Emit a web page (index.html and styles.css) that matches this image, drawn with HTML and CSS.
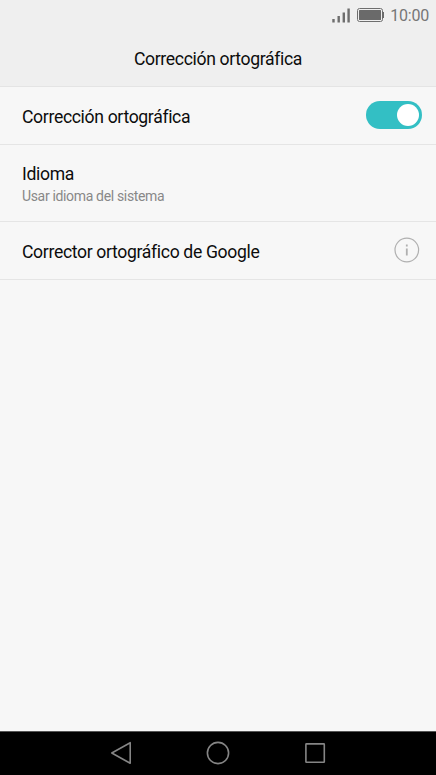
FILE: index.html
```html
<!DOCTYPE html>
<html lang="es">
  <head>
    <meta charset="UTF-8" />
    <meta name="viewport" content="width=device-width, initial-scale=1.0" />
    <title>Corrección ortográfica</title>
    <link rel="stylesheet" href="styles.css">
  </head>

  <body>
    <div class="status-bar">
      <svg class="signal" width="18" height="15" viewBox="0 0 18 15">
        <path d="M1.5 11v3.5M6.7 8v6.5M11.8 4.5v10M16.6 0.5v14" />
      </svg>
      <svg class="battery" width="28" height="14" viewBox="0 0 28 14">
        <rect class="battery-case" x="0.5" y="0.5" width="25" height="13" rx="2" />
        <rect class="battery-level" x="2" y="2" width="22" height="10" rx="0.5" />
        <path class="battery-level" d="M25.5 4h1.5v6h-1.5z" />
      </svg>
      <span class="clock">10:00</span>
    </div>

    <header class="header">
      <h1>Corrección ortográfica</h1>
    </header>

    <main class="settings">
      <div class="row">
        <div class="title">Corrección ortográfica</div>
        <div class="toggle"><div class="knob"></div></div>
      </div>
      <div class="row row-tall">
        <div>
          <div class="title">Idioma</div>
          <div class="summary">Usar idioma del sistema</div>
        </div>
      </div>
      <div class="row">
        <div class="title">Corrector ortográfico de Google</div>
        <svg class="info" width="26" height="26" viewBox="0 0 26 26">
          <circle cx="12.8" cy="13" r="11.8" />
          <path d="M12.8 11.5v7M12.8 7.4v2" />
        </svg>
      </div>
    </main>

    <nav class="nav-bar">
      <svg width="24" height="24" viewBox="0 0 24 24">
        <path d="M21.2 1.7v20.6L2.8 12z" />
      </svg>
      <svg width="24" height="24" viewBox="0 0 24 24">
        <circle cx="12" cy="12" r="10.6" />
      </svg>
      <svg width="24" height="24" viewBox="0 0 24 24">
        <rect x="2.9" y="2.9" width="18.4" height="18.4" rx="0.5" />
      </svg>
    </nav>
  </body>
</html>
```
FILE: styles.css
```css
* {
  box-sizing: border-box;
}

html,
body {
  height: 100%;
}

body {
  display: flex;
  flex-direction: column;
  margin: 0;
  background: #f7f7f7;
  color: #0c0c0c;
  font-family: Roboto, sans-serif;
}

.status-bar {
  display: flex;
  justify-content: flex-end;
  align-items: center;
  height: 30px;
  padding-right: 7px;
  background: #efefef;
}

.signal {
  margin-right: 7px;
  fill: none;
  stroke: #6e6e6e;
  stroke-width: 2.4;
  stroke-linecap: butt;
}

.battery {
  margin-right: 5px;
}

.battery-case {
  fill: none;
  stroke: #6e6e6e;
}

.battery-level {
  fill: #6a6a6a;
}

.clock {
  color: #767676;
  font-size: 16px;
  letter-spacing: -0.2px;
  line-height: 31px;
}

.header {
  height: 57px;
  border-bottom: 1px solid #e4e4e4;
  background: #efefef;
}

h1 {
  margin: 0;
  font-size: 17.6px;
  font-weight: 400;
  letter-spacing: -0.34px;
  line-height: 58px;
  text-align: center;
}

.row {
  display: flex;
  justify-content: space-between;
  align-items: center;
  height: 58px;
  padding: 0 14px 0 22px;
  border-bottom: 1px solid #e5e5e5;
}

.row-tall {
  height: 77px;
}

.title {
  padding-top: 2px;
  font-size: 17.6px;
  letter-spacing: -0.34px;
  line-height: 24px;
}

.summary {
  color: #888;
  font-size: 14px;
  letter-spacing: -0.34px;
  line-height: 20px;
}

.toggle {
  display: flex;
  justify-content: flex-end;
  align-items: center;
  width: 56px;
  height: 28px;
  margin-bottom: 1px;
  padding-right: 3px;
  border-radius: 14px;
  background: #33bfc4;
}

.knob {
  width: 22px;
  height: 22px;
  border-radius: 50%;
  background: #fff;
}

.info {
  margin-right: 2px;
  margin-bottom: 2px;
  fill: none;
  stroke: #b0b0b0;
  stroke-width: 1.2;
}

.info path {
  stroke-width: 1.8;
}

.nav-bar {
  display: flex;
  justify-content: center;
  gap: 73px;
  height: 44px;
  margin-top: auto;
  padding-top: 9px;
  border-top: 1px solid #555;
  background: #000;
}

.nav-bar svg {
  fill: none;
  stroke: #858585;
  stroke-width: 1.6;
  stroke-linejoin: round;
}
```
